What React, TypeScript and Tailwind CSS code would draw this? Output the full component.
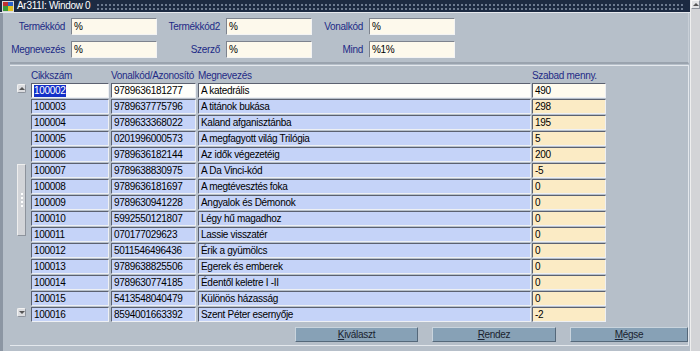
import React from 'react';

const rows = [
  ['100002', '9789636181277', 'A katedrális', '490'],
  ['100003', '9789637775796', 'A titánok bukása', '298'],
  ['100004', '9789633368022', 'Kaland afganisztánba', '195'],
  ['100005', '0201996000573', 'A megfagyott világ Trilógia', '5'],
  ['100006', '9789636182144', 'Az idők végezetéig', '200'],
  ['100007', '9789638830975', 'A Da Vinci-kód', '-5'],
  ['100008', '9789636181697', 'A megtévesztés foka', '0'],
  ['100009', '9789630941228', 'Angyalok és Démonok', '0'],
  ['100010', '5992550121807', 'Légy hű magadhoz', '0'],
  ['100011', '070177029623', 'Lassie visszatér', '0'],
  ['100012', '5011546496436', 'Érik a gyümölcs', '0'],
  ['100013', '9789638825506', 'Egerek és emberek', '0'],
  ['100014', '9789630774185', 'Édentől keletre I -II', '0'],
  ['100015', '5413548040479', 'Különös házasság', '0'],
  ['100016', '8594001663392', 'Szent Péter esernyője', '-2'],
];

const cell =
  'h-[15px] flex items-center pl-[2px] border-t border-l border-t-[#5b6170] border-l-[#5b6170] border-b border-r border-b-[#eef0f4] border-r-[#eef0f4] overflow-hidden whitespace-nowrap';

function Field({ label, value, labelW }: { label: string; value: string; labelW: string }) {
  return (
    <div className="flex items-center">
      <div className={`${labelW} text-right pr-[6px] text-[#1c2a86] whitespace-nowrap`}>{label}</div>
      <div className="w-[86px] h-[17px] bg-[#fdf9ec] border-t border-l border-[#7d838e] border-b-[#f4f4f4] border-r-[#f4f4f4] border-b border-r flex items-center pl-[2px] text-black">
        {value}
      </div>
    </div>
  );
}

function Btn({ label, w }: { label: string; w: string }) {
  return (
    <div
      className={`${w} h-[15px] bg-[#87a1b6] border-t border-l border-[#c9d4dd] border-b border-r border-b-[#55687a] border-r-[#55687a] flex items-center justify-center text-[#1a1f2e]`}
    >
      <span className="underline decoration-[#1a1f2e]">{label[0]}</span>
      {label.slice(1)}
    </div>
  );
}

export default function App() {
  return (
    <div className="w-[700px] h-[351px] flex overflow-hidden text-[10px] tracking-[-0.3px] font-['Liberation_Sans',Arial,sans-serif] bg-[#b6bfc9]">
      <div className="w-[690px] flex flex-col">
        {/* title bar */}
        <div className="h-[13px] bg-[#1c2a42] flex items-center pl-[2px] border-b border-[#e6e9ee]">
          <svg width="12" height="11" viewBox="0 0 12 11">
            <rect x="0" y="0" width="12" height="11" fill="#d9d9d9" />
            <rect x="1" y="1" width="5" height="4" fill="#c03030" />
            <rect x="6" y="1" width="5" height="4" fill="#2a62c8" />
            <rect x="1" y="5" width="5" height="5" fill="#3a9a3a" />
            <rect x="6" y="5" width="5" height="5" fill="#e0c020" />
          </svg>
          <span className="ml-[3px] text-white leading-none">Ar311I: Window 0</span>
          <div className="flex-1 h-[7px] ml-[6px] mr-[6px] bg-[radial-gradient(circle,#6c7a90_0.8px,transparent_1px)] bg-[length:4px_4px]" />
        </div>
        {/* body */}
        <div className="flex-1 flex border-l-[3px] border-[#8c96a3]">
          <div className="flex-1 flex flex-col pl-[7px] pr-[4px]">
            {/* search panel */}
            <div className="h-[51px] border-r border-b-2 border-[#c9d0d8] border-b-[#9aa3ae] flex flex-col gap-[6px] pt-[5px]">
              <div className="flex">
                <Field label="Termékkód" value="%" labelW="w-[61px]" />
                <Field label="Termékkód2" value="%" labelW="w-[69px]" />
                <Field label="Vonalkód" value="%" labelW="w-[57px]" />
              </div>
              <div className="flex">
                <Field label="Megnevezés" value="%" labelW="w-[61px]" />
                <Field label="Szerző" value="%" labelW="w-[69px]" />
                <Field label="Mind" value="%1%" labelW="w-[57px]" />
              </div>
            </div>
            {/* table panel */}
            <div className="h-[281px] mt-[1px] border-t border-r border-[#e4e8ed] border-b border-b-[#e4e8ed] flex flex-col">
              <div className="flex pt-[3px]">
                {/* left scrollbar */}
                <div className="w-[21px] flex flex-col items-end pr-[5px] pt-[15px]">
                  <div className="w-[9px] h-[9px] bg-[#dcdde0] rounded-[2px] border border-[#f2f2f2] border-b-[#8d939c] border-r-[#8d939c] flex items-center justify-center">
                    <div className="w-0 h-0 border-l-[3px] border-r-[3px] border-b-[3px] border-l-transparent border-r-transparent border-b-[#555]" />
                  </div>
                  <div className="w-[9px] h-[72px] mt-[71px] bg-[#d2d4d8] border border-[#eeeeee] border-b-[#8d939c] border-r-[#8d939c] flex flex-col items-center justify-center gap-[2px]">
                    <div className="w-[2px] h-[2px] bg-white" />
                    <div className="w-[2px] h-[2px] bg-white" />
                    <div className="w-[2px] h-[2px] bg-white" />
                    <div className="w-[2px] h-[2px] bg-white" />
                  </div>
                  <div className="w-[9px] h-[9px] mt-[72px] bg-[#dcdde0] rounded-[2px] border border-[#f2f2f2] border-b-[#8d939c] border-r-[#8d939c] flex items-center justify-center">
                    <div className="w-0 h-0 border-l-[3px] border-r-[3px] border-t-[3px] border-l-transparent border-r-transparent border-t-[#555]" />
                  </div>
                </div>
                {/* grid */}
                <div className="flex flex-col">
                  <div className="flex h-[13px] items-end text-[#1f2b86] leading-none whitespace-nowrap">
                    <div className="w-[80px] pb-[1px]">Cikkszám</div>
                    <div className="w-[87px] pb-[1px]">Vonalkód/Azonosító</div>
                    <div className="w-[334px] pb-[1px]">Megnevezés</div>
                    <div className="w-[74px] pb-[1px]">Szabad menny.</div>
                  </div>
                  <div className="flex flex-col gap-[1px] mt-[1px]">
                    {rows.map((r, i) => {
                      const first = i === 0;
                      const blue = first ? 'bg-[#fefefa]' : 'bg-[#c5d3f8]';
                      return (
                        <div key={r[0]} className="flex text-black">
                          <div className={`${cell} ${blue} w-[78px] mr-[2px]`}>
                            {first ? <span className="bg-[#1430c8] text-white leading-[12px]">{r[0]}</span> : r[0]}
                          </div>
                          <div className={`${cell} ${blue} w-[85px] mr-[2px]`}>{r[1]}</div>
                          <div className={`${cell} ${blue} w-[333px] mr-[1px]`}>{r[2]}</div>
                          <div className={`${cell} ${first ? 'bg-[#fffbee]' : 'bg-[#fbebc5]'} w-[74px]`}>{r[3]}</div>
                        </div>
                      );
                    })}
                  </div>
                </div>
              </div>
              <div className="flex mt-[5px] pl-[285px] gap-[14px]">
                <Btn label="Kiválaszt" w="w-[123px]" />
                <Btn label="Rendez" w="w-[124px]" />
                <Btn label="Mégse" w="w-[118px]" />
              </div>
            </div>
          </div>
        </div>
      </div>
      {/* right scrollbar */}
      <div className="w-[10px] bg-[#d3d4d7] border-l border-[#eeeeee] flex flex-col">
        <div className="h-[9px] w-[9px] bg-[#e2e3e5] border border-[#f7f7f7] border-b-[#8d939c] border-r-[#8d939c] flex items-center justify-center">
          <div className="w-0 h-0 border-l-[3px] border-r-[3px] border-b-[3px] border-l-transparent border-r-transparent border-b-[#555]" />
        </div>
      </div>
    </div>
  );
}
